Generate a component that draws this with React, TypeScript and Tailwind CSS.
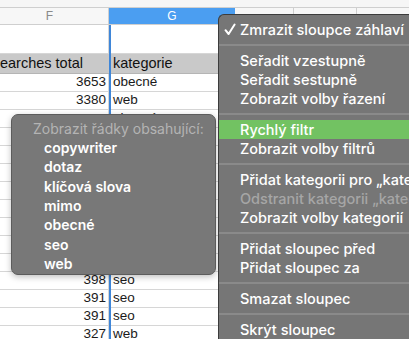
import React from "react";

const sans = { fontFamily: "Inter, 'Noto Sans', sans-serif" };

type Row = { n: string; k: string };
const rows: Row[] = [
  { n: "3653", k: "obecné" },
  { n: "3380", k: "web" },
  { n: "", k: "obecné" },
  { n: "", k: "" },
  { n: "", k: "" },
  { n: "", k: "" },
  { n: "", k: "" },
  { n: "", k: "" },
  { n: "", k: "" },
  { n: "", k: "" },
  { n: "", k: "" },
  { n: "398", k: "seo" },
  { n: "391", k: "seo" },
  { n: "391", k: "seo" },
  { n: "327", k: "web" },
];

function Cells({ f, g }: { f: React.ReactNode; g: React.ReactNode }) {
  return (
    <div className="flex h-[18px] border-b border-[#d6d6d6]">
      <div className="w-[109px] shrink-0 border-r border-[#d6d6d6] flex items-center justify-end pr-[2px]">{f}</div>
      <div className="w-[126px] shrink-0 border-r border-[#d6d6d6] flex items-center pl-[4px]">{g}</div>
      <div className="w-[59px] shrink-0 border-r border-[#d6d6d6]" />
      <div className="w-[63px] shrink-0 border-r border-[#d6d6d6]" />
      <div className="flex-1" />
    </div>
  );
}

function Sep() {
  return (
    <div className="h-[12px] flex items-center">
      <div className="h-[2px] w-full bg-[#8a8a8a]" />
    </div>
  );
}

function CheckIcon() {
  return (
    <svg width="12" height="13" viewBox="0 0 12 13" fill="none">
      <path d="M1.5 7.2 L4.6 11 L10.6 1.5" stroke="white" strokeWidth="2" strokeLinecap="round" strokeLinejoin="round" />
    </svg>
  );
}

function Item({ children, checked, active, disabled }: { children: React.ReactNode; checked?: boolean; active?: boolean; disabled?: boolean }) {
  return (
    <div
      className={`h-[19px] flex items-center whitespace-nowrap pl-[21px] relative ${active ? "bg-[#72c262]" : ""} ${disabled ? "text-[#a6a6a6]" : "text-white"}`}
    >
      {checked && (
        <span className="absolute left-[5px] top-0 h-full flex items-center">
          <CheckIcon />
        </span>
      )}
      {children}
    </div>
  );
}

export default function App() {
  return (
    <div className="w-[409px] h-[339px] relative overflow-hidden bg-white" style={{ fontFamily: "'Liberation Sans', Arial, sans-serif" }}>
      {/* top strip */}
      <div className="h-[8px] bg-[#f6f6f6] border-b border-[#cfcfcf]" />
      {/* column headers */}
      <div className="flex h-[17px] border-b border-[#cfcfcf] text-[12px]">
        <div className="w-[118px] -ml-[9px] shrink-0 bg-[#f7f7f7] border-r border-[#cfcfcf] flex items-center justify-center text-[#8a8a8a]">F</div>
        <div className="w-[126px] shrink-0 bg-[#4b9ef1] flex items-center justify-center text-white">G</div>
        <div className="w-[59px] shrink-0 bg-[#f7f7f7] border-r border-[#cfcfcf]" />
        <div className="w-[63px] shrink-0 bg-[#f7f7f7] border-r border-[#cfcfcf]" />
        <div className="flex-1 bg-[#f7f7f7]" />
      </div>
      {/* table body */}
      <div className="relative text-[13.5px] text-[#1a1a1a]">
        <div className="absolute left-[109px] top-0 bottom-0 w-[2px] bg-[#3f86d8]" />
        <div className="flex h-[29px] border-b border-[#d6d6d6]">
          <div className="w-[109px] shrink-0 border-r border-[#d6d6d6]" />
          <div className="w-[126px] shrink-0 border-r border-[#d6d6d6]" />
          <div className="flex-1" />
        </div>
        <div className="flex h-[20px] bg-[#c9c9c9] border-b border-[#b5b5b5] font-medium text-[14.5px] text-[#111]">
          <div className="w-[109px] shrink-0 flex items-center justify-end overflow-hidden whitespace-nowrap pr-[26px]">searches total</div>
          <div className="w-[126px] shrink-0 flex items-center pl-[4px]">kategorie</div>
          <div className="flex-1" />
        </div>
        {rows.map((r, i) => (
          <Cells key={i} f={r.n} g={r.k} />
        ))}
      </div>

      {/* quick filter popup */}
      <div
        className="absolute z-20 left-[11px] top-[114px] w-[205px] h-[161px] rounded-[7px] bg-[#787878] border border-[#5c5c5c] shadow-[0_2px_6px_rgba(0,0,0,0.25)] pt-[4px]"
        style={sans}
      >
        <div className="h-[19px] flex items-center pl-[21px] text-[14px] text-[#b4b4b4] whitespace-nowrap">Zobrazit řádky obsahující:</div>
        {["copywriter", "dotaz", "klíčová slova", "mimo", "obecné", "seo", "web"].map((t) => (
          <div key={t} className="h-[19.3px] flex items-center pl-[32px] text-[14px] font-semibold text-white whitespace-nowrap">
            {t}
          </div>
        ))}
      </div>

      {/* context menu */}
      <div
        className="absolute z-20 left-[218px] top-[14px] w-[220px] h-[340px] rounded-tl-[6px] bg-[#767676] border-l border-t border-[#3c3c3c] pt-[5px] text-[14.5px] font-medium"
        style={sans}
      >
        <Item checked>Zmrazit sloupce záhlaví</Item>
        <Sep />
        <Item>Seřadit vzestupně</Item>
        <Item>Seřadit sestupně</Item>
        <Item>Zobrazit volby řazení</Item>
        <Sep />
        <Item active>Rychlý filtr</Item>
        <Item>Zobrazit volby filtrů</Item>
        <Sep />
        <Item>Přidat kategorii pro „kategorie“</Item>
        <Item disabled>Odstranit kategorii „kategorie“</Item>
        <Item>Zobrazit volby kategorií</Item>
        <Sep />
        <Item>Přidat sloupec před</Item>
        <Item>Přidat sloupec za</Item>
        <Sep />
        <Item>Smazat sloupec</Item>
        <Sep />
        <Item>Skrýt sloupec</Item>
      </div>
    </div>
  );
}
